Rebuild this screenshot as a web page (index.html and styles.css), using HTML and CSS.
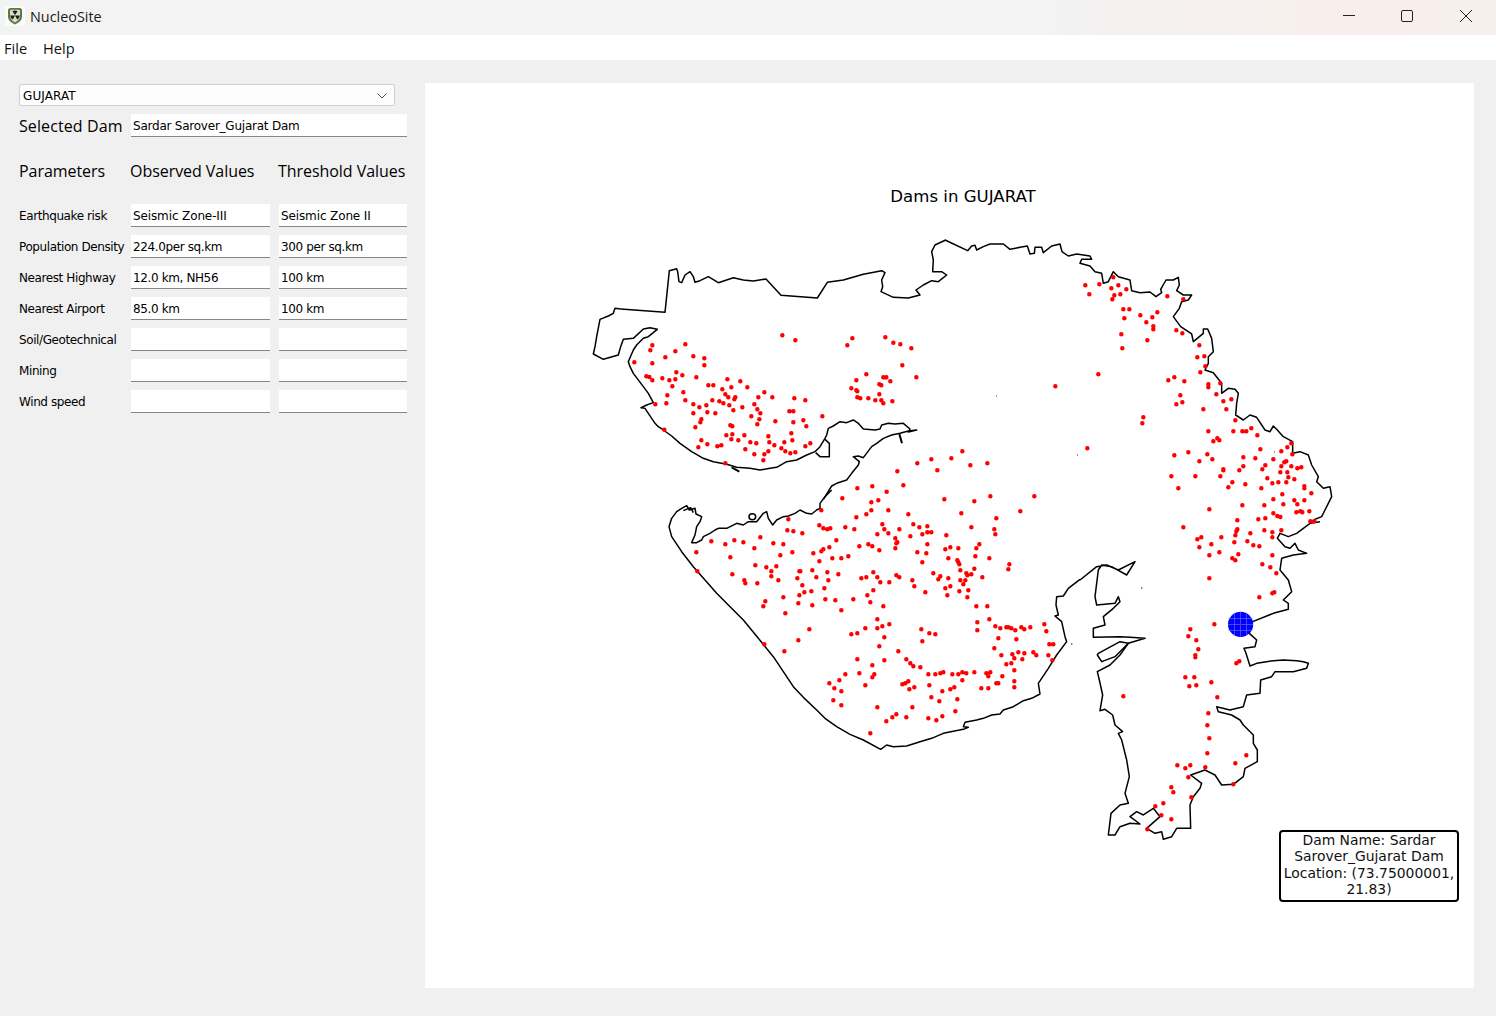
FILE: index.html
```html
<!DOCTYPE html>
<html lang="en">
<head>
    <meta charset="UTF-8">
    <title>NucleoSite</title>
    <link rel="stylesheet" href="styles.css">
</head>
<body>
    <header class="titlebar">
        <svg class="app-icon" width="20" height="20" viewBox="0 0 20 20">
            <rect width="20" height="20" fill="#fbfbfb"/>
            <path d="M3 4.5Q3 2 5.5 2H14.5Q17 2 17 4.5V11Q17 15 10 18.5Q3 15 3 11Z" fill="#5d7a3e"/>
            <path d="M5 5Q5 3.8 6.2 3.8H13.8Q15 3.8 15 5V10.5Q15 13.6 10 16.4Q5 13.6 5 10.5Z" fill="#d9ddcb"/>
            <path d="M10 9L7.4 5.2A5 5 0 0 1 12.6 5.2ZM10 9.4L14.8 9.4A5 5 0 0 1 12.2 13.4ZM10 9.4L7.8 13.4A5 5 0 0 1 5.2 9.4Z" fill="#1c1c1c"/>
        </svg>
        <span class="app-name">NucleoSite</span>
        <div class="window-controls">
            <span class="win-btn"><svg width="14" height="14" viewBox="0 0 14 14"><path d="M1 6.5h12" stroke="#222" fill="none"/></svg></span>
            <span class="win-btn"><svg width="14" height="14" viewBox="0 0 14 14"><rect x="1.5" y="1.5" width="11" height="11" rx="1.5" stroke="#222" fill="none"/></svg></span>
            <span class="win-btn"><svg width="14" height="14" viewBox="0 0 14 14"><path d="M1 1l12 12M13 1L1 13" stroke="#222" fill="none"/></svg></span>
        </div>
    </header>
    <nav class="menubar">
        <span class="menu-item">File</span>
        <span class="menu-item">Help</span>
    </nav>
    <main class="content">
        <section class="side">
            <div class="combo">
                <span>GUJARAT</span>
                <svg width="10" height="6" viewBox="0 0 10 6"><path d="M0.5 0.5L5 5L9.5 0.5" stroke="#555" fill="none"/></svg>
            </div>
            <div class="dam-row">
                <label class="big-label">Selected Dam</label>
                <div class="field dam-field">Sardar Sarover_Gujarat Dam</div>
            </div>
            <div class="heads">
                <span class="big-label">Parameters</span>
                <span class="big-label">Observed Values</span>
                <span class="big-label">Threshold Values</span>
            </div>
            <div class="params">
                <label>Earthquake risk</label><div class="field zone">Seismic Zone-III</div><div class="field zone">Seismic Zone II</div>
                <label>Population Density</label><div class="field">224.0per sq.km</div><div class="field">300 per sq.km</div>
                <label>Nearest Highway</label><div class="field">12.0 km, NH56</div><div class="field">100 km</div>
                <label>Nearest Airport</label><div class="field">85.0 km</div><div class="field">100 km</div>
                <label>Soil/Geotechnical</label><div class="field"></div><div class="field"></div>
                <label>Mining</label><div class="field"></div><div class="field"></div>
                <label>Wind speed</label><div class="field"></div><div class="field"></div>
            </div>
        </section>
        <section class="plot">
            <svg class="map" viewBox="425 83 1049 905" width="1049" height="905">
                <text class="map-title" x="963" y="202" text-anchor="middle">Dams in GUJARAT</text>

                <!-- outline, traced piece by piece, each piece in its own zoomed coordinates -->
                <g class="outline">
                    <g transform="translate(580 230) scale(.33333)">
                        <path d="M122 237L255 247L268 122L290 116L293 125L297 155L305 158L315 135L330 125L340 140L345 157L360 152L385 140L415 158L460 143L490 150L520 153L558 147L603 196L712 204L742 157L790 150L850 133L905 122L915 128L905 150L908 170L903 185L940 202L985 204L1020 195L1008 180L1030 165L1055 152L1075 155L1100 135L1085 125L1058 125L1060 90L1055 65L1065 45L1097 30"/>
                        <path d="M730 808L755 768L770 760L800 750L815 730L835 705L838 695L820 680L835 678L850 683L875 650L890 640L910 625L935 615L960 610L985 603L1010 600L985 606L990 597L970 580L945 582L925 580L905 585L900 597L885 600L850 597L835 580L820 570L800 578L780 575L760 588L745 595L740 615L735 625L720 650L705 665L680 675L650 690L620 695L590 712L570 715L540 720L510 715L470 712L440 703L400 695L370 685L335 665L300 640L275 618L250 600L235 590L225 580L195 535L183 533L200 525L220 518L205 490L190 470L160 430L150 410L145 395L160 360L170 345L190 325L205 320L232 298L210 293L190 297L160 325L130 328L122 350L115 375L70 388L40 372L45 350L50 320L60 268L85 258L100 250L105 235L122 237"/>
                        <path d="M735 628L748 640L748 680L720 680L707 668"/>
                        <path class="thick" d="M958 612L966 640M455 712L478 725"/>
                    </g>
                    <g transform="translate(940 230) scale(.33333)">
                        <path d="M15 30L83 62L95 48L105 46L110 60L130 50L150 42L190 42L210 58L240 52L262 48L270 72L283 70L285 52L305 52L310 68L335 48L360 42L366 65L385 78L410 72L450 78L455 88L425 88L420 100L450 108L465 125L485 130L490 160L505 155L520 125L535 140L570 150L575 182L600 188L630 186L648 200L665 188L662 178L678 150L700 150L715 142L718 165L710 182L730 195L755 195L745 210L725 215L718 235L700 260L722 290L755 312L760 335L790 310L790 297L803 297L815 325L820 365L805 380L805 400L795 420L820 428L845 460L845 490L865 475L885 478L895 490L890 520L887 555L910 570L930 555L950 562L975 600L990 605L1000 588L1012 600L1030 620L1058 635L1058 670L1080 665L1105 675L1115 705L1135 740L1130 755L1150 775L1170 770L1175 800L1155 840L1145 860L1120 870"/>
                    </g>
                    <g transform="translate(1040 520) scale(.33333)">
                        <path d="M840 5L810 10L770 40L745 50L720 40L712 55L735 80L750 85L765 70L775 90L800 100L760 105L725 115L720 150L745 180L755 215L730 240L745 250L745 268L700 280L638 305L628 340L650 360L645 380L612 385L618 400L630 438L650 430L680 425L700 422L730 420L770 422L790 425L805 430L800 445L760 455L705 455L695 470L662 480L660 520L620 525L610 560L570 570L530 560L535 575L575 585L600 600L610 615L640 645L640 670L652 690L652 725L615 745L610 770L580 793L545 795L525 765L495 750L452 765L485 790L480 805L460 830L450 855L452 925L410 925L395 950L370 958L365 935L345 940L320 925L360 890L340 865L310 885L290 875L270 890L300 912L270 910L240 920L225 945L205 945L213 880L240 855L265 850L255 820L268 770L260 720L245 660L235 640L248 635L225 615L218 585L195 568L180 572L188 525L178 480L172 455L210 435L240 405L265 370L315 355L270 352L240 350L160 352L160 325L195 315L190 290L220 265L240 245L235 230L225 250L170 255L165 230L175 150L185 135L215 140L260 165L285 125L235 150L200 135L170 140L120 180"/>
                        <path d="M175 400L240 365L265 370L225 410L185 425L172 405Z"/>
                    </g>
                    <g transform="translate(660 490) scale(.33333)">
                        <path d="M1260 268L1225 295L1210 318L1190 320L1188 345L1195 375L1185 378L1205 395L1215 440L1220 455L1190 495L1165 535L1135 580L1140 612L1115 625L1090 632L1060 650L1030 660L1020 672L995 675L970 685L950 690L915 697L910 710L925 712L910 718L850 730L815 745L780 755L740 768L700 770L680 765L662 778L610 750L570 733L530 710L495 685L470 660L430 622L400 590L370 545L340 500L295 445L250 390L205 345L170 310L135 270L100 230L65 185L35 140L27 110L35 85L50 65L65 55L80 47L88 60L105 55L108 72L125 80L120 95L110 110L105 135L95 158L110 158L125 150L130 140L150 130L165 120L175 115L200 115L230 100L250 105L265 95L290 95L310 70L320 65L325 85L338 105L350 90L370 80L385 78L405 70L420 60L440 70L455 72L470 60L480 55L480 40L495 20L515 0"/>
                        <ellipse cx="277" cy="80" rx="10" ry="9"/>
                        <path d="M70 62L92 53L100 68"/>
                    </g>
                </g>

                <!-- dam locations, same zoomed coordinates -->
                <g class="dams">
                    <path transform="translate(580 230) scale(.33333)" d="M607 316h0M646 331h0M802 346h0M817 325h0M916 322h0M940 338h0M961 343h0M994 355h0M217 346h0M211 361h0M316 343h0M286 364h0M256 382h0M340 379h0M373 385h0M373 406h0M163 397h0M217 400h0M199 439h0M208 441h0M217 451h0M247 445h0M268 451h0M286 448h0M289 427h0M307 436h0M349 442h0M277 469h0M385 466h0M400 466h0M442 448h0M427 478h0M454 472h0M481 454h0M502 472h0M553 487h0M535 502h0M577 502h0M643 505h0M676 511h0M262 496h0M310 487h0M316 511h0M226 523h0M259 520h0M340 523h0M379 526h0M397 511h0M418 514h0M430 520h0M436 493h0M445 502h0M466 502h0M463 508h0M448 526h0M487 532h0M523 523h0M532 538h0M541 550h0M460 541h0M358 532h0M340 550h0M382 547h0M406 550h0M514 559h0M538 568h0M532 583h0M586 574h0M628 544h0M640 544h0M640 577h0M670 571h0M679 589h0M727 559h0M364 568h0M361 577h0M346 592h0M451 586h0M457 589h0M253 599h0M439 616h0M457 613h0M493 616h0M565 619h0M634 610h0M364 631h0M454 628h0M475 631h0M511 637h0M529 640h0M568 637h0M613 637h0M637 631h0M382 643h0M355 652h0M412 649h0M424 646h0M496 658h0M583 646h0M604 655h0M616 664h0M631 670h0M646 667h0M676 649h0M691 640h0M565 664h0M553 673h0M523 673h0M550 691h0M436 700h0M859 433h0M829 451h0M814 475h0M829 481h0M832 484h0M832 502h0M841 505h0M865 505h0M886 511h0M898 493h0M904 511h0M910 520h0M937 514h0M898 463h0M904 466h0M910 442h0M919 442h0M931 454h0M967 406h0M1009 442h0M1012 700h0M1054 688h0M952 724h0M1072 721h0M832 775h0M877 769h0M970 766h0"/>
                    <path transform="translate(940 230) scale(.33333)" d="M520 142h0M436 166h0M478 163h0M514 175h0M535 166h0M559 178h0M448 193h0M541 193h0M523 196h0M517 208h0M682 199h0M730 208h0M550 238h0M568 238h0M553 265h0M601 256h0M637 262h0M652 247h0M619 277h0M640 289h0M640 298h0M544 313h0M622 331h0M547 355h0M709 301h0M727 310h0M778 346h0M772 382h0M793 379h0M796 409h0M781 427h0M475 433h0M346 469h0M685 451h0M703 442h0M733 454h0M805 463h0M805 472h0M841 460h0M829 493h0M721 496h0M709 523h0M727 517h0M850 514h0M874 508h0M790 538h0M859 538h0M610 562h0M607 580h0M886 571h0M805 604h0M880 604h0M907 604h0M919 604h0M934 595h0M952 616h0M820 634h0M832 625h0M838 631h0M1054 640h0M1042 652h0M961 658h0M1024 664h0M1057 673h0M442 655h0M703 676h0M745 667h0M802 673h0M817 688h0M778 694h0M910 682h0M946 685h0M1000 688h0M1039 694h0M1033 697h0M1024 709h0M1054 709h0M1072 715h0M1084 712h0M976 706h0M967 718h0M910 709h0M898 721h0M850 718h0M850 721h0M1021 727h0M1042 727h0M694 739h0M766 739h0M841 739h0M982 745h0M1045 742h0M1063 748h0M997 760h0M1015 757h0M1039 757h0M877 757h0M865 772h0M916 763h0M1093 769h0M1093 775h0M964 775h0M715 775h0M1114 790h0M1027 793h0M1000 808h0M1063 811h0M1093 811h0M1072 823h0M1030 823h0M973 826h0M907 826h0M808 838h0M1069 847h0M1081 844h0M1087 847h0M1108 844h0M1000 850h0M1012 858h0M1021 861h0M976 865h0M955 868h0M892 871h0M67 664h0M34 685h0M91 706h0M142 700h0"/>
                    <path transform="translate(660 490) scale(.33333)" d="M547 25h0M680 5h0M634 37h0M655 31h0M853 28h0M943 34h0M991 19h0M1123 19h0M1081 64h0M634 61h0M619 73h0M685 61h0M745 73h0M904 70h0M1009 85h0M484 61h0M385 88h0M589 82h0M478 106h0M490 115h0M502 118h0M511 115h0M556 112h0M583 118h0M667 103h0M673 118h0M685 130h0M718 118h0M760 103h0M778 112h0M802 109h0M802 127h0M814 127h0M787 133h0M934 112h0M1003 118h0M1006 133h0M382 121h0M400 124h0M427 130h0M652 133h0M751 139h0M859 136h0M301 142h0M154 154h0M196 163h0M223 151h0M250 157h0M340 160h0M370 163h0M283 175h0M529 151h0M598 169h0M625 163h0M637 169h0M658 181h0M706 145h0M712 157h0M709 160h0M706 175h0M802 163h0M772 187h0M799 190h0M856 178h0M871 172h0M895 175h0M958 163h0M949 175h0M397 187h0M109 187h0M508 172h0M490 178h0M484 184h0M460 190h0M361 196h0M211 202h0M517 205h0M544 205h0M565 199h0M946 199h0M988 205h0M865 205h0M892 211h0M895 217h0M898 223h0M787 217h0M478 214h0M286 226h0M319 232h0M349 229h0M334 244h0M112 244h0M418 244h0M421 244h0M457 241h0M502 247h0M535 253h0M640 247h0M901 241h0M943 236h0M1048 223h0M1045 238h0M217 253h0M334 259h0M412 265h0M469 262h0M604 265h0M619 262h0M652 262h0M709 256h0M718 262h0M820 250h0M841 259h0M835 268h0M865 265h0M919 250h0M922 256h0M934 253h0M967 262h0M901 271h0M916 271h0M253 271h0M256 280h0M292 280h0M355 271h0M505 271h0M661 277h0M688 277h0M757 271h0M910 283h0M763 289h0M871 289h0M856 295h0M427 286h0M493 295h0M433 307h0M454 304h0M640 301h0M796 307h0M898 304h0M925 301h0M418 316h0M622 316h0M862 316h0M922 322h0M370 322h0M496 328h0M526 331h0M580 328h0M316 334h0M631 337h0M415 340h0M310 349h0M457 346h0M670 349h0M949 349h0M982 349h0M544 361h0M376 370h0M652 388h0M988 388h0M952 397h0M448 418h0M616 415h0M652 415h0M667 409h0M688 403h0M784 418h0M952 421h0M1006 409h0M1021 415h0M1039 412h0M1045 412h0M1054 415h0M1066 421h0M1084 412h0M1093 418h0M1111 412h0M1153 403h0M1159 424h0M574 433h0M592 430h0M808 430h0M826 433h0M673 442h0M1015 445h0M1069 448h0M415 451h0M787 454h0M658 469h0M313 463h0M1168 463h0M1180 463h0M1003 475h0M373 484h0M715 484h0M1075 487h0M1057 493h0M1093 490h0M1120 487h0M1129 496h0M1165 496h0M1024 496h0M1063 505h0M1087 508h0M1177 511h0M592 508h0M673 511h0M739 508h0M751 520h0M637 526h0M760 529h0M781 532h0M1054 520h0M1039 523h0M1063 541h0M556 553h0M598 550h0M643 553h0M637 562h0M805 553h0M826 553h0M841 550h0M850 547h0M877 553h0M895 553h0M907 547h0M919 550h0M943 547h0M979 550h0M991 547h0M985 559h0M1027 559h0M538 571h0M907 571h0M1063 574h0M508 580h0M616 586h0M727 583h0M736 580h0M745 574h0M808 586h0M1009 580h0M1015 580h0M523 595h0M763 592h0M748 598h0M883 592h0M871 598h0M964 595h0M985 595h0M1063 592h0M544 604h0M847 604h0M814 622h0M892 628h0M520 631h0M838 634h0M544 646h0M652 652h0M757 652h0M886 664h0M709 673h0M697 682h0M739 682h0M847 679h0M679 694h0M805 685h0M829 691h0M631 730h0"/>
                    <path transform="translate(1040 520) scale(.33333)" d="M430 22h0M811 4h0M823 4h0M592 28h0M589 34h0M586 46h0M631 40h0M673 31h0M697 37h0M724 31h0M697 52h0M472 58h0M484 52h0M544 52h0M583 67h0M622 64h0M640 76h0M658 79h0M514 73h0M478 82h0M508 106h0M538 97h0M595 103h0M577 115h0M586 121h0M697 106h0M667 133h0M691 142h0M709 160h0M508 175h0M658 232h0M697 220h0M703 217h0M523 313h0M451 328h0M445 349h0M469 361h0M475 388h0M466 406h0M466 412h0M598 424h0M589 430h0M436 472h0M463 472h0M448 499h0M469 496h0M514 487h0M532 532h0M250 529h0M505 580h0M502 616h0M508 655h0M502 700h0M619 706h0M586 730h0M412 736h0M436 745h0M451 736h0M496 742h0M445 772h0M580 793h0M394 802h0M400 817h0M454 832h0M370 850h0M346 859h0M364 886h0M394 898h0M322 928h0"/>
                </g>

                <path class="specks" d="M996 396h.8M1077 455h.8M1274 452h.8M1141 588h1.4M1071 644h1.4"/>

                <!-- selected dam -->
                <circle cx="1240.6" cy="624.4" r="12.6" fill="#0000ff"/>
                <path class="marker-grid" d="M1234.5 612.5V636M1240.5 612V636.5M1246.5 612.5V636M1228.5 618.5H1252.5M1228 624.5H1253M1228.5 630.5H1252.5"/>
                <circle cx="1240.6" cy="624.5" r=".8" fill="#ff0000"/>
            </svg>
            <div class="annotation">Dam Name: Sardar<br>Sarover_Gujarat Dam<br>Location: (73.75000001,<br>21.83)</div>
        </section>
    </main>
</body>
</html>
```
FILE: styles.css
```css
* {
    box-sizing: border-box;
}
html, body {
    height: 100%;
}
body {
    margin: 0;
    display: flex;
    flex-direction: column;
    background: #f0f0f0;
    overflow: hidden;
    font-family: "DejaVu Sans", sans-serif;
    color: #000;
}
.titlebar {
    height: 35px;
    display: flex;
    align-items: center;
    padding-left: 5px;
    background: linear-gradient(90deg, #f3f3f3 0%, #f3f3f3 70%, #f8efec 88%, #f7efec 100%);
}
.app-icon {
    margin-top: -3px;
}
.app-name {
    margin-left: 5px;
    margin-top: -2px;
    font-family: "Open Sans", sans-serif;
    font-size: 14.4px;
    color: #1a1a1a;
}
.window-controls {
    margin-left: auto;
    display: flex;
    align-self: flex-start;
    padding-right: 1px;
}
.win-btn {
    width: 58.5px;
    display: flex;
    justify-content: center;
    align-items: center;
    height: 32px;
}
.menubar {
    height: 25px;
    background: #fff;
    display: flex;
    align-items: center;
    gap: 16px;
    padding-left: 4px;
}
.menu-item {
    font-family: "Open Sans", sans-serif;
    font-size: 14.6px;
    color: #111;
}
.content {
    flex: 1;
    display: flex;
    padding: 23px 22px 28px 19px;
    gap: 18px;
}
.side {
    width: 388px;
}
.combo {
    width: 376px;
    height: 22px;
    margin-top: 1px;
    background: #fdfdfd;
    border: 1px solid #cfcfcf;
    border-radius: 2px;
    display: flex;
    align-items: center;
    justify-content: space-between;
    padding: 1px 7px 0 3px;
    font-size: 12px;
    letter-spacing: .1px;
}
.field {
    height: 23px;
    background: #fff;
    border-bottom: 1px solid #868686;
    padding: 1px 2px 0;
    display: flex;
    align-items: center;
    font-size: 12px;
    letter-spacing: -.38px;
    white-space: nowrap;
    overflow: hidden;
}
.field.zone {
    letter-spacing: -.12px;
}
.dam-row {
    display: flex;
    align-items: center;
    margin-top: 8px;
}
.big-label {
    font-family: "Open Sans", sans-serif;
    font-size: 16px;
    white-space: nowrap;
    letter-spacing: -.05px;
}
.dam-row .big-label {
    width: 112px;
    letter-spacing: .1px;
}
.dam-field {
    width: 276px;
    letter-spacing: -.23px;
}
.heads {
    display: grid;
    grid-template-columns: 111px 148px 129px;
    margin-top: 22px;
    height: 24px;
    align-items: center;
}
.params {
    display: grid;
    grid-template-columns: 103px 139px 128px;
    column-gap: 9px;
    row-gap: 8px;
    align-items: center;
    margin-top: 21px;
}
.params label {
    font-size: 12px;
    white-space: nowrap;
    letter-spacing: -.4px;
}
.plot {
    position: relative;
    width: 1049px;
    background: #fff;
}
.map {
    display: block;
}
.map-title {
    font-family: "DejaVu Sans", sans-serif;
    font-size: 16.6px;
}
.outline path, .outline ellipse {
    fill: none;
    stroke: #000;
    stroke-width: 4.5;
    stroke-linejoin: round;
}
.outline path.thick {
    stroke-width: 6;
}
.dams path {
    fill: none;
    stroke: #ff0000;
    stroke-width: 13.5;
    stroke-linecap: round;
}
.specks {
    fill: none;
    stroke: #000;
    stroke-width: 1;
}
.marker-grid {
    fill: none;
    stroke: #6f6fff;
    stroke-width: .6;
}
.annotation {
    position: absolute;
    left: 854px;
    top: 747px;
    width: 180px;
    height: 72px;
    border: 2px solid #000;
    border-radius: 4px;
    background: #fff;
    font-size: 13.9px;
    line-height: 16.4px;
    text-align: center;
    white-space: nowrap;
    color: #111;
}
```
